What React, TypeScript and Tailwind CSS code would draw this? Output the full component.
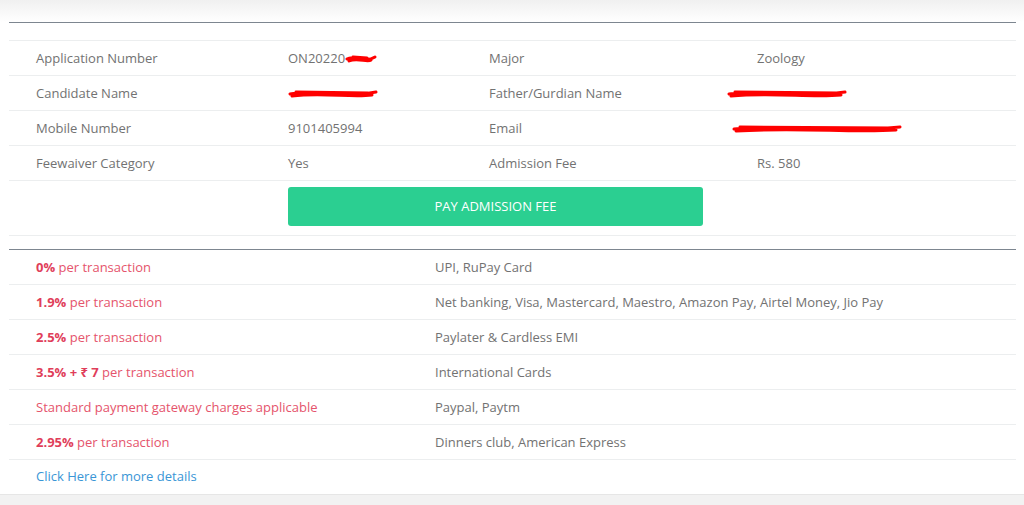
import React from 'react';

const details = [
  ['Application Number', 'ON20220', 'Major', 'Zoology'],
  ['Candidate Name', '', 'Father/Gurdian Name', ''],
  ['Mobile Number', '9101405994', 'Email', ''],
  ['Feewaiver Category', 'Yes', 'Admission Fee', 'Rs. 580'],
];

const fees: { bold?: string; rest: string; methods: string }[] = [
  { bold: '0%', rest: ' per transaction', methods: 'UPI, RuPay Card' },
  { bold: '1.9%', rest: ' per transaction', methods: 'Net banking, Visa, Mastercard, Maestro, Amazon Pay, Airtel Money, Jio Pay' },
  { bold: '2.5%', rest: ' per transaction', methods: 'Paylater & Cardless EMI' },
  { bold: '3.5% + ₹ 7', rest: ' per transaction', methods: 'International Cards' },
  { rest: 'Standard payment gateway charges applicable', methods: 'Paypal, Paytm' },
  { bold: '2.95%', rest: ' per transaction', methods: 'Dinners club, American Express' },
];

// red marker scribble used to hide personal data
const Scribble: React.FC<{ w: number }> = ({ w }) => (
  <svg width={w} height="14" viewBox={`0 0 ${w} 14`} className="inline-block align-middle">
    <path d={`M2 7 C ${w * 0.3} 2, ${w * 0.6} 12, ${w - 2} 5 M4 9 C ${w * 0.4} 5, ${w * 0.7} 11, ${w - 6} 8 M8 5 L ${w - 10} 6`} stroke="#f00" strokeWidth="3" fill="none" strokeLinecap="round" />
  </svg>
);

const App: React.FC = () => {
  return (
    <div className="w-[1024px] h-[505px] bg-white overflow-hidden text-[13px] text-[#727272]" style={{ fontFamily: '"Open Sans", "Noto Sans", sans-serif' }}>
      <div className="h-[22px] bg-gradient-to-b from-[#f0f0f0] to-white" />
      <div className="mx-[9px] w-[1007px]">
        <div className="h-px bg-[#7d8690]" />
        <div className="h-[17px]" />
        <div className="border-t border-[#eceeef]">
          {details.map((r, i) => (
            <div key={i} className="flex h-[35px] items-center pt-px border-b border-[#eceeef]">
              <div className="w-[279px] pl-[27px]">{r[0]}</div>
              <div className="w-[201px] flex items-center">
                {r[1]}
                {i === 0 && <Scribble w={32} />}
                {i === 1 && <Scribble w={90} />}
              </div>
              <div className="w-[268px]">{r[2]}</div>
              <div className="flex-1 flex items-center">
                {r[3]}
                {i === 1 && <span className="-ml-[30px]"><Scribble w={120} /></span>}
                {i === 2 && <span className="-ml-[25px]"><Scribble w={170} /></span>}
              </div>
            </div>
          ))}
          <div className="h-[55px] flex items-start pt-[6px] border-b border-[#eceeef]">
            <button className="ml-[279px] w-[415px] h-[39px] rounded-[3px] bg-[#2bcf91] text-white text-[13px] uppercase">Pay Admission Fee</button>
          </div>
        </div>
        <div className="h-[13px]" />
        <div className="h-px bg-[#7d8690]" />
        <div>
          {fees.map((f, i) => (
            <div key={i} className="flex h-[35px] items-center pt-[2px] border-b border-[#eceeef]">
              <div className="w-[426px] pl-[27px] text-[#e5546c]">
                {f.bold && <span className="font-bold text-[#e03e5a]">{f.bold}</span>}
                {f.rest}
              </div>
              <div className="flex-1">{f.methods}</div>
            </div>
          ))}
          <div className="flex h-[34px] items-center pl-[27px] text-[#3a96d6]">Click Here for more details</div>
        </div>
      </div>
      <div className="h-px bg-[#e6e6e6]" />
      <div className="h-[12px] bg-[#f2f2f2]" />
    </div>
  );
};

export default App;
